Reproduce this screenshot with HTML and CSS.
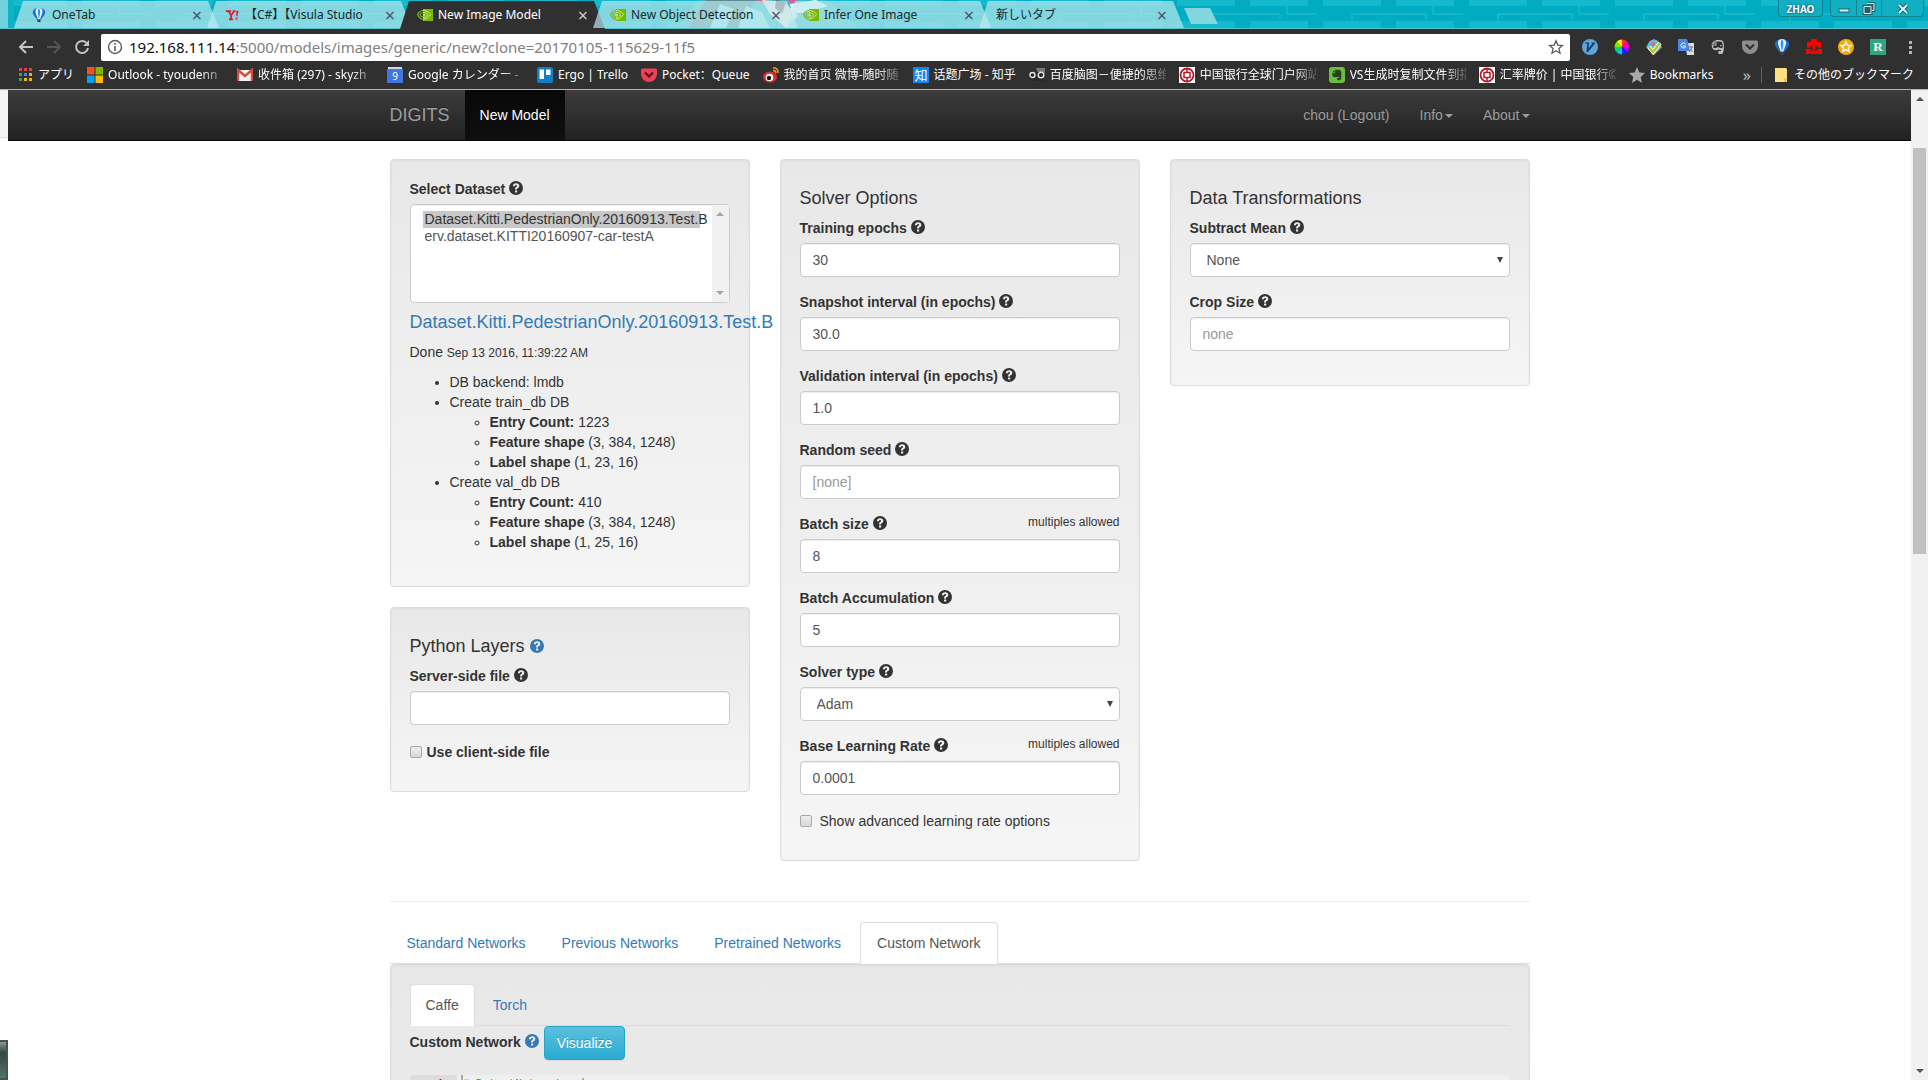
FILE: index.html
```
<!DOCTYPE html>
<html lang="en">
<head>
<meta charset="utf-8">
<meta name="viewport" content="width=device-width, initial-scale=1">
<title>New Image Model</title>
<link rel="stylesheet" href="styles.css">
</head>
<body>
<svg class="defs" width="0" height="0" aria-hidden="true">
  <symbol id="help" viewBox="0 0 14 14">
    <path fill-rule="evenodd" fill="currentColor" d="M7 0a7 7 0 1 1 0 14A7 7 0 0 1 7 0ZM6 9.4v2h2.2v-2ZM3.9 5.2H6c0-.8.4-1.200 1.100-1.200.6 0 1 .3 1 .8 0 .6-.4.8-1 1.300C6.300 6.700 6 7.300 6 8.500h2c0-.7.2-.9.9-1.400.9-.6 1.400-1.300 1.400-2.400 0-1.500-1.200-2.400-3.100-2.400C5.100 2.300 3.900 3.400 3.900 5.200Z"/>
  </symbol>
  <symbol id="nv" viewBox="0 0 16 12">
    <path fill="#76b900" d="M6 0h10v12H6z"/>
    <path fill="none" stroke="#76b900" stroke-width="1.200" d="M6 1.500C3.500 1.700 1.500 3.500.6 5.500 2 8.500 4 10.200 6 10.500M6 3.500C4.500 3.700 3.400 4.700 3 5.600c.8 1.700 1.900 2.500 3 2.800"/>
    <path fill="none" stroke="#cdeaa0" stroke-width="1" d="M6 1.500c4 0 6.500 2 7.500 4-1.800 2.500-4 4.400-7.500 4.700M6 3.600c2.400-.2 3.800.8 4.700 2C9.500 7.500 8 8.500 6 8.400M6 5l2 1-2 1"/>
  </symbol>
  <symbol id="balloon" viewBox="0 0 16 18">
    <path fill="#1b6fc4" d="M8 0c5 0 8 2.600 8 5.500 0 3.500-3.500 6-5.500 9.500h-5C3.500 11.500 0 9 0 5.500 0 2.600 3 0 8 0Z"/>
    <path fill="#dff1ff" d="M8 0C4 0 3 3 3.600 6L6.500 14h3l2.900-8C13 3 12 0 8 0Z"/>
    <path fill="#2f93e8" d="M8 0C6.500 2 6.200 5 7 9l1 5 1-5c.8-4 .5-7-1-9Z"/>
    <path fill="#39424c" d="M6 15h4v3H6z"/>
  </symbol>
  <symbol id="boc" viewBox="0 0 16 16">
    <path fill="#fff" d="M0 0h16v16H0z"/>
    <circle cx="8" cy="8" r="6.500" fill="none" stroke="#b01c2e" stroke-width="1.800"/>
    <path fill="none" stroke="#b01c2e" stroke-width="1.500" d="M8 1v4M8 11v4M5 5.500h6v5H5z"/>
  </symbol>
  <symbol id="elephant" viewBox="0 0 16 16">
    <path fill="currentColor" d="M6 1h4c2 0 3.500 1 3.700 3.500.4 3 .3 6-.5 9-.4 1.500-3 2-4.500 1.200-1-.7-.7-2.700.3-2.800h2v-1.200c-1 .6-2 .3-2.700-.5-1 1.300-3.200 1-4.500.5C2 10 1.700 7.500 1.700 5.500H5.500V1Z"/>
    <path fill="currentColor" d="M4.700 1.200v3.500H1.400z"/>
    <circle cx="10.800" cy="7" r="1" fill="#303030"/>
  </symbol>
</svg>

<header class="chrome">
  <div class="tabstrip">
    <svg class="theme-art" width="200" height="28" viewBox="0 0 200 28" aria-hidden="true">
      <path fill="#37bccb" d="M10 28 30 0h130l30 28z"/>
      <path fill="#5c8c96" d="M38 0h50L74 28H20z"/>
      <path fill="#93dfe5" d="m52 4 14 5-8 19H42zM78 6l16 6 8 16H70z"/>
      <path fill="#d36596" d="M88 0h12l2 4h-9zM118 0h10l8 8-8-2z"/>
      <path fill="#f6e8e2" d="m94 0 22 2 14 14-12 12-16-14z"/>
      <path fill="#86626b" d="m108 0 10 2-4 12-7-6z"/>
      <path fill="#e1f7f8" d="m122 4 26-4 12 6-20 6-16 2z"/>
    </svg>
    <div class="stub"></div>
    <nav class="tabs" aria-label="Browser tabs">
      <div class="tab"><svg class="favicon"><use href="#balloon"/></svg><span class="tab-title">OneTab</span><button class="close" aria-label="Close tab">×</button></div>
      <div class="tab jp"><svg class="favicon" viewBox="0 0 16 16"><path d="M1 3.500h6M4 3.500l3 5 3.500-5M7 8v5M4.500 13H9M9 3.500h3" stroke="#e8132f" stroke-width="2" fill="none"/><path d="m13 3 2.600.3L14 9.500h-1.200zM12.500 11h2l-.5 2h-2z" fill="#e8132f"/></svg><span class="tab-title">【C#】【Visula Studio</span><button class="close" aria-label="Close tab">×</button></div>
      <div class="tab active"><svg class="favicon"><use href="#nv"/></svg><span class="tab-title">New Image Model</span><button class="close" aria-label="Close tab">×</button></div>
      <div class="tab"><svg class="favicon"><use href="#nv"/></svg><span class="tab-title">New Object Detection</span><button class="close" aria-label="Close tab">×</button></div>
      <div class="tab"><svg class="favicon"><use href="#nv"/></svg><span class="tab-title">Infer One Image</span><button class="close" aria-label="Close tab">×</button></div>
      <div class="tab jp"><span class="tab-title">新しいタブ</span><button class="close" aria-label="Close tab">×</button></div>
      <button class="new-tab" aria-label="New tab"></button>
    </nav>
    <div class="window-controls">
      <button class="profile">ZHAO</button>
      <div class="control-group">
        <button aria-label="Minimize"><svg width="16" height="14"><rect x="3" y="7" width="10" height="3" fill="#d9f6f8" stroke="#25616b"/></svg></button>
        <button aria-label="Restore"><svg width="16" height="14"><path d="M6 1.500h7v7h-2M3 4.500h7v7H3zM5.500 7.500h2v1h-2z" fill="none" stroke="#25616b" stroke-width="3"/><path d="M6 1.500h7v7h-2M3 4.500h7v7H3z" fill="none" stroke="#d9f6f8"/></svg></button>
        <button class="wide" aria-label="Close window"><svg width="16" height="14"><path d="m4 3 8 8M12 3l-8 8" stroke="#25616b" stroke-width="4"/><path d="m4 3 8 8M12 3l-8 8" stroke="#d9f6f8" stroke-width="2"/></svg></button>
      </div>
    </div>
  </div>

  <div class="toolbar">
    <button class="tool" aria-label="Back"><svg width="16" height="16" viewBox="0 0 16 16"><path d="M15 8H2.500M8 2 2 8l6 6" fill="none" stroke="#c4c4c4" stroke-width="2"/></svg></button>
    <button class="tool" aria-label="Forward"><svg width="16" height="16" viewBox="0 0 16 16"><path d="M1 8h12.500M8 2l6 6-6 6" fill="none" stroke="#555" stroke-width="2"/></svg></button>
    <button class="tool" aria-label="Reload"><svg width="16" height="16" viewBox="0 0 16 16"><path d="M13 4.500A6 6 0 1 0 14 9" fill="none" stroke="#c4c4c4" stroke-width="2"/><path d="M15 1v6H9z" fill="#c4c4c4"/></svg></button>
    <div class="omnibox">
      <svg width="16" height="16" viewBox="0 0 16 16"><circle cx="8" cy="8" r="6.500" fill="none" stroke="#5a5a5a" stroke-width="1.400"/><path d="M7.200 7h1.600v5H7.200zM7.200 4h1.600v1.700H7.200z" fill="#5a5a5a"/></svg>
      <div class="url"><span class="host">192.168.111.14</span>:5000/models/images/generic/new?clone=20170105-115629-11f5</div>
      <svg width="16" height="16" viewBox="0 0 16 16"><path d="m8 1.700 1.800 4.400 4.700.4-3.600 3.100 1.100 4.600L8 11.700l-4 2.500 1.100-4.600L1.500 6.500l4.700-.4z" fill="none" stroke="#5a5a5a" stroke-width="1.300"/></svg>
    </div>
    <div class="extensions">
      <button aria-label="Vimium"><svg viewBox="0 0 16 16"><circle cx="8" cy="8" r="8" fill="#5ba4dc"/><path d="M3 3.500h4v1L6.500 9l4-4.500h-1v-1H13v1L6 13H4.500l.7-8.500H3z" fill="#173f66"/></svg></button>
      <button aria-label="Color picker"><svg viewBox="0 0 16 16"><path fill="#ff2a2a" d="M8 8 8 .5A7.500 7.500 0 0 1 13.300 2.700z"/><path fill="#f0b" d="M8 8 13.300 2.700A7.500 7.500 0 0 1 15.500 8z"/><path fill="#a0f" d="M8 8h7.500a7.500 7.500 0 0 1-2.200 5.300z"/><path fill="#12f" d="m8 8 5.300 5.300A7.500 7.500 0 0 1 8 15.500z"/><path fill="#0cf" d="M8 8v7.500a7.500 7.500 0 0 1-5.300-2.200z"/><path fill="#0d6" d="m8 8-5.300 5.300A7.500 7.500 0 0 1 .5 8z"/><path fill="#7e0" d="M8 8H.5a7.500 7.500 0 0 1 2.200-5.300z"/><path fill="#fe0" d="M8 8 2.700 2.700A7.500 7.500 0 0 1 8 .5z"/></svg></button>
      <button aria-label="Reader"><svg viewBox="0 0 16 16"><path d="m8 0 8 8-8 8-8-8z" fill="#e6ae32"/><circle cx="8" cy="7" r="6.500" fill="#68b4e8"/><path d="m3 8 4 5 7-9" fill="none" stroke="#fff" stroke-width="4"/><path d="m3 8 4 5 7-9" fill="none" stroke="#a9c93a" stroke-width="2.500"/><circle cx="7" cy="5" r="2" fill="#d87343"/></svg></button>
      <button aria-label="Translate"><svg viewBox="0 0 16 16"><path d="M7 4h9v12H9z" fill="#ddd"/><path d="M0 0h9l3 12H0z" fill="#4a86e8"/><path d="M7.500 5A2.500 2.500 0 1 0 7.500 8V7H5" fill="none" stroke="#fff"/><path d="M10.500 8H15M12.700 7v1M14 8c-1 3-2 4-3 5M12 10l2.500 3" stroke="#777" fill="none"/></svg></button>
      <button class="pale" aria-label="Evernote"><svg viewBox="0 0 16 16"><use href="#elephant"/><path fill="#303030" d="M6.500 2.500H10c1.500 0 2.300.8 2.500 2.500.3 2 .2 3 0 4H10L8 8 6 9H3.500L3 6.500h3.500z"/><circle cx="10.800" cy="6.800" r=".8" fill="#bbb"/></svg></button>
      <button aria-label="Pocket"><svg viewBox="0 0 16 16"><path d="M0 3q0-1.500 1.500-1.500h13Q16 1.500 16 3v4a8 8 0 0 1-16 0z" fill="#8d8d8d"/><path d="m4 5.500 4 4 4-4" fill="none" stroke="#333" stroke-width="2.200"/></svg></button>
      <button aria-label="OneTab"><svg viewBox="0 0 16 18"><use href="#balloon"/></svg></button>
      <button aria-label="Briefcase"><svg viewBox="0 0 16 16"><path d="M5 0h6v3h4v5.500h-3.500V7h-7v1.500H1V3h4zM0 10h4.500v1.500h7V10H16v5H0z" fill="#f00"/><path d="M6.500 6.500h3v4h-3z" fill="#f00"/></svg></button>
      <button aria-label="Favorites"><svg viewBox="0 0 16 16"><circle cx="8" cy="8" r="8" fill="#f5a910"/><path d="m8 3 1.500 3.300 3.500.3-2.600 2.300.8 3.500L8 10.600l-3.200 1.800.8-3.500L3 6.600l3.500-.3z" fill="none" stroke="#fff" stroke-width="1.400"/></svg></button>
      <button class="r-badge" aria-label="R">R</button>
      <button aria-label="Menu"><svg viewBox="0 0 16 16"><path d="M7 2h3v3H7zM7 7h3v3H7zM7 12h3v3H7z" fill="#b5b5b5"/></svg></button>
    </div>
  </div>

  <nav class="bookmarks" aria-label="Bookmarks">
    <a class="bm jp" href="#"><svg viewBox="0 0 16 16"><path d="M2 1h3v3H2zM7 1h3v3H7zM12 1h3v3h-3z" fill="#e0443a"/><path d="M2 6h3v3H2z" fill="#2faa56"/><path d="M7 6h3v3H7z" fill="#4285f4"/><path d="M12 6h3v3h-3zM7 11h3v3H7zM12 11h3v3h-3z" fill="#f4b400"/><path d="M2 11h3v3H2z" fill="#2faa56"/></svg><span>アプリ</span></a>
    <a class="bm" href="#"><svg viewBox="0 0 16 16"><path d="M0 0h7.500v7.500H0z" fill="#f25022"/><path d="M8.500 0H16v7.500H8.500z" fill="#7fba00"/><path d="M0 8.500h7.500V16H0z" fill="#00a4ef"/><path d="M8.500 8.500H16V16H8.500z" fill="#ffb900"/></svg><span class="long">Outlook - tyoudenn</span></a>
    <a class="bm" href="#"><svg viewBox="0 0 16 16"><path d="M1 3h14v11H1z" fill="#f2f2f2"/><path d="M1 14V3l7 6 7-6v11" fill="none" stroke="#d54b3d" stroke-width="2.400"/></svg><span class="long">收件箱 (297) - skyzh</span></a>
    <a class="bm jp" href="#"><svg viewBox="0 0 16 16"><path d="M1 0h14v3H1z" fill="#ccd6e6"/><path d="M0 2h16v14H0z" fill="#3f76e0"/><text x="8" y="13" fill="#fff" font-size="10" text-anchor="middle">9</text></svg><span class="long">Google カレンダー -</span></a>
    <a class="bm" href="#"><svg viewBox="0 0 16 16"><rect width="16" height="16" rx="2" fill="#0f7fc7"/><path d="M2.500 2.500H7V12H2.500zM9 2.500h4.500V8H9z" fill="#fff"/></svg><span>Ergo | Trello</span></a>
    <a class="bm" href="#"><svg viewBox="0 0 16 16"><path d="M0 3q0-1.500 1.500-1.500h13Q16 1.500 16 3v4a8 8 0 0 1-16 0z" fill="#ee4056"/><path d="m4 5.500 4 4 4-4" fill="none" stroke="#4b1720" stroke-width="2.200"/></svg><span>Pocket：Queue</span></a>
    <a class="bm" href="#"><svg viewBox="0 0 16 16"><ellipse cx="7" cy="10" rx="7" ry="5.500" fill="#e22c2c"/><circle cx="6.500" cy="10.500" r="3.800" fill="#fff"/><circle cx="6" cy="11" r="2.200" fill="#111"/><path d="M10 1c3.500-.5 5.500 2 5 5M10 3.500c2 0 3 .8 3 2.500" fill="none" stroke="#f29b20" stroke-width="1.500"/></svg><span class="long">我的首页 微博-随时随</span></a>
    <a class="bm" href="#"><svg viewBox="0 0 16 16"><path d="M0 0h16v16H0z" fill="#0f88eb"/><text x="8" y="13" fill="#fff" font-size="13" text-anchor="middle">知</text></svg><span>话题广场 - 知乎</span></a>
    <a class="bm" href="#"><svg viewBox="0 0 16 16"><path d="M7 1h9v5H9z" fill="#777"/><path d="M1 5h14v9H1z" fill="#222a2c"/><circle cx="3.500" cy="8" r="2.500" fill="#222" stroke="#e5e5e5" stroke-width="1.400"/><circle cx="12" cy="8" r="2.800" fill="#222" stroke="#e5e5e5" stroke-width="1.400"/></svg><span class="long">百度脑图－便捷的思维</span></a>
    <a class="bm" href="#"><svg><use href="#boc"/></svg><span class="long">中国银行全球门户网站</span></a>
    <a class="bm dark" href="#"><svg viewBox="0 0 16 16"><rect width="16" height="16" rx="3" fill="#69c03c"/><svg x="2" y="2" width="12" height="12" viewBox="0 0 16 16"><use href="#elephant"/></svg></svg><span class="long">VS生成时复制文件到指</span></a>
    <a class="bm" href="#"><svg><use href="#boc"/></svg><span class="long">汇率牌价 | 中国银行©</span></a>
    <a class="bm" href="#"><svg viewBox="0 0 16 16"><path d="m8 0 2.300 5.500 5.700.5-4.300 3.900L13 16l-5-3.300L3 16l1.300-6.100L0 6l5.700-.5z" fill="#aaa"/></svg><span>Bookmarks</span></a>
    <button class="more" aria-label="More bookmarks">»</button>
    <a class="bm folder jp" href="#"><svg viewBox="0 0 16 16"><path d="M2 1h11l1 1v13H2z" fill="#ffe082"/><path d="M11 11h3v4h-3z" fill="#f4c64f"/></svg><span>その他のブックマーク</span></a>
  </nav>
</header>

<div class="viewport">
  <div class="edge" aria-hidden="true"><div class="edge-top"></div><div class="edge-bottom"></div></div>
  <div class="page">
    <nav class="navbar">
      <div class="navbar-inner">
        <a class="brand" href="#">DIGITS</a>
        <a class="nav-link current" href="#">New Model</a>
        <a class="nav-link push" href="#">chou (Logout)</a>
        <a class="nav-link" href="#">Info<i class="caret"></i></a>
        <a class="nav-link" href="#">About<i class="caret"></i></a>
      </div>
    </nav>

    <main class="container">
      <form class="columns">
        <div class="column">
          <section class="well">
            <label class="label" for="dataset">Select Dataset <svg class="help"><use href="#help"/></svg></label>
            <div class="control listbox">
              <select id="dataset" size="5">
                <option selected>Dataset.Kitti.PedestrianOnly.20160913.Test.B</option>
                <option>erv.dataset.KITTI20160907-car-testA</option>
              </select>
              <div class="list-scroll" aria-hidden="true"><i class="arrow up"></i><i class="arrow down"></i></div>
            </div>
            <h4 class="heading"><a href="#">Dataset.Kitti.PedestrianOnly.20160913.Test.B</a></h4>
            <div>Done <small>Sep 13 2016, 11:39:22 AM</small></div>
            <ul class="facts">
              <li>DB backend: lmdb</li>
              <li>Create train_db DB
                <ul>
                  <li><b>Entry Count:</b> 1223</li>
                  <li><b>Feature shape</b> (3, 384, 1248)</li>
                  <li><b>Label shape</b> (1, 23, 16)</li>
                </ul>
              </li>
              <li>Create val_db DB
                <ul>
                  <li><b>Entry Count:</b> 410</li>
                  <li><b>Feature shape</b> (3, 384, 1248)</li>
                  <li><b>Label shape</b> (1, 25, 16)</li>
                </ul>
              </li>
            </ul>
          </section>
          <section class="well">
            <h4 class="heading">Python Layers <a href="#" aria-label="Help"><svg class="help"><use href="#help"/></svg></a></h4>
            <div class="group">
              <label class="label" for="server-file">Server-side file <svg class="help"><use href="#help"/></svg></label>
              <input class="control" id="server-file" type="text">
            </div>
            <div class="check tight"><input type="checkbox" id="client-file"><label for="client-file"><b>Use client-side file</b></label></div>
          </section>
        </div>

        <div class="column">
          <section class="well">
            <h4 class="heading">Solver Options</h4>
            <div class="group">
              <label class="label" for="epochs">Training epochs <svg class="help"><use href="#help"/></svg></label>
              <input class="control" id="epochs" type="text" value="30">
            </div>
            <div class="group">
              <label class="label" for="snapshot">Snapshot interval (in epochs) <svg class="help"><use href="#help"/></svg></label>
              <input class="control" id="snapshot" type="text" value="30.0">
            </div>
            <div class="group">
              <label class="label" for="validation">Validation interval (in epochs) <svg class="help"><use href="#help"/></svg></label>
              <input class="control" id="validation" type="text" value="1.0">
            </div>
            <div class="group">
              <label class="label" for="seed">Random seed <svg class="help"><use href="#help"/></svg></label>
              <input class="control" id="seed" type="text" placeholder="[none]">
            </div>
            <div class="group">
              <div class="label-row"><label class="label" for="batch">Batch size <svg class="help"><use href="#help"/></svg></label><small>multiples allowed</small></div>
              <input class="control" id="batch" type="text" value="8">
            </div>
            <div class="group">
              <label class="label" for="accumulation">Batch Accumulation <svg class="help"><use href="#help"/></svg></label>
              <input class="control" id="accumulation" type="text" value="5">
            </div>
            <div class="group">
              <label class="label" for="solver">Solver type <svg class="help"><use href="#help"/></svg></label>
              <select class="control dropdown" id="solver"><option>Adam</option></select>
            </div>
            <div class="group">
              <div class="label-row"><label class="label" for="rate">Base Learning Rate <svg class="help"><use href="#help"/></svg></label><small>multiples allowed</small></div>
              <input class="control" id="rate" type="text" value="0.0001">
            </div>
            <div class="check"><input type="checkbox" id="advanced"><label for="advanced">Show advanced learning rate options</label></div>
          </section>
        </div>

        <div class="column">
          <section class="well">
            <h4 class="heading">Data Transformations</h4>
            <div class="group">
              <label class="label" for="mean">Subtract Mean <svg class="help"><use href="#help"/></svg></label>
              <select class="control dropdown" id="mean"><option>None</option></select>
            </div>
            <div class="group">
              <label class="label" for="crop">Crop Size <svg class="help"><use href="#help"/></svg></label>
              <input class="control" id="crop" type="text" placeholder="none">
            </div>
          </section>
        </div>
      </form>

      <hr class="rule">

      <nav class="nav-tabs network-tabs">
        <a href="#">Standard Networks</a>
        <a href="#">Previous Networks</a>
        <a href="#">Pretrained Networks</a>
        <a class="selected" href="#">Custom Network</a>
      </nav>
      <section class="well tall">
        <nav class="nav-tabs">
          <a class="selected" href="#">Caffe</a>
          <a href="#">Torch</a>
        </nav>
        <div class="network-row">
          <b>Custom Network <a href="#" aria-label="Help"><svg class="help"><use href="#help"/></svg></a></b>
          <button class="visualize" type="button">Visualize</button>
        </div>
        <div class="editor"><div class="gutter">1</div><code># DetectNet network</code></div>
      </section>
    </main>
  </div>
  <div class="scrollbar" aria-hidden="true">
    <i class="arrow up"></i><div class="thumb"></div><i class="arrow down"></i>
  </div>
</div>
</body>
</html>
```
FILE: styles.css
```
* { box-sizing: border-box; }

body {
  margin: 0;
  height: 100vh;
  display: flex;
  flex-direction: column;
  overflow: hidden;
  font: 14px/20px "Liberation Sans", Arial, sans-serif;
  color: #333;
  background: #fff;
}

a { color: #337ab7; text-decoration: none; }
button { font: inherit; padding: 0; border: 0; background: none; color: inherit; }
small { font-size: 12px; }
.defs { position: absolute; }

/* Browser window */
.chrome {
  flex: none;
  font: 12px/16px "Noto Sans", "Noto Sans CJK SC", sans-serif;
  background: #303030;
  border-bottom: 1px solid #b5b5b5;
}
.jp { font-family: "Noto Sans", "Noto Sans CJK JP", sans-serif; }

.tabstrip {
  position: relative;
  display: flex;
  height: 29px;
  border-bottom: 1px solid #4fc3cf;
  background: #00acc1 url("data:image/svg+xml,%3Csvg xmlns='http://www.w3.org/2000/svg' width='146' height='28'%3E%3Cpath fill='%2314b9cc' d='M0 0h58v6H0zM73 0h58v6H73zM0 21h58v7H0zM73 21h58v7H73z'/%3E%3Cpath fill='none' stroke='%2325becd' d='M29 21v-7h74v5M110 6v8h30'/%3E%3C/svg%3E") 9px 0;
}
.theme-art { position: absolute; left: 668px; top: 0; }
.stub { width: 14px; flex: none; background: rgba(225, 245, 247, .5); border-right: 6px solid #10b2c5; }
.tabs { position: relative; display: flex; flex: 1; padding-top: 1px; }
.tab {
  display: flex;
  align-items: center;
  gap: 5px;
  width: 205px;
  height: 27px;
  margin-right: -12px;
  padding: 0 15px 0 17px;
  background: rgba(190, 234, 239, .68);
  clip-path: polygon(9px 0, 194px 0, 100% 100%, 0 100%);
  color: #14292c;
}
.tab.active { background: #303030; color: #fff; height: 28px; }
.favicon { width: 16px; height: 14px; flex: none; }
.tab-title { flex: 1; white-space: nowrap; }
.close { width: 14px; font-size: 18px; line-height: 16px; color: #456; }
.active .close { color: #ccc; }
.new-tab {
  width: 34px;
  height: 16px;
  margin: 7px 0 0 12px;
  background: #82d6de;
  clip-path: polygon(0 0, 26px 0, 100% 100%, 7px 100%);
}
.window-controls { display: flex; gap: 7px; padding-right: 4px; height: 17px; }
.profile, .control-group {
  border: 1px solid #168391;
  border-top: 0;
  border-radius: 0 0 4px 4px;
  background: #10b0c2;
}
.profile { width: 45px; padding-top: 2px; font-size: 10px; font-weight: bold; line-height: 14px; color: #fff; text-shadow: 0 0 2px #124; }
.control-group { display: flex; }
.control-group button { width: 25px; padding-top: 2px; line-height: 14px; }
.control-group button + button { border-left: 1px solid #168391; }
.control-group .wide { width: 42px; }

.toolbar {
  display: flex;
  align-items: center;
  height: 32px;
  margin-top: 2px;
  padding: 2px 10px 2px 12px;
}
.tool { width: 28px; height: 16px; }
.tool svg, .extensions svg { display: block; width: 16px; height: 16px; margin: auto; }
.omnibox {
  display: flex;
  align-items: center;
  flex: 1;
  gap: 6px;
  height: 27px;
  margin-left: 5px;
  padding: 0 6px;
  background: #fff;
  border-radius: 2px;
}
.url { flex: 1; font-size: 15px; line-height: 20px; color: #808080; }
.host { color: #111; }
.extensions { display: flex; gap: 16px; margin-left: 12px; }
.extensions button { width: 16px; height: 16px; }
.pale { color: #bbb; }
.r-badge { background: #2da781; color: #fff; font: bold 13px/16px "Liberation Serif", serif; }

.bookmarks { display: flex; align-items: center; height: 26px; padding: 0 14px 2px 17px; }
.bm { display: flex; align-items: center; flex: none; gap: 5px; margin-right: 13px; color: #fff; white-space: nowrap; }
.bm > svg { width: 16px; height: 16px; flex: none; }
.bm .long { width: 116px; mask-image: linear-gradient(to right, #000 92px, rgba(0, 0, 0, .2) 116px); }
.bm.dark svg svg { color: #2c3d22; }
.bm.folder { margin: 0; padding-left: 11px; border-left: 1px solid #606060; }
.more { margin-left: auto; margin-right: 10px; color: #bbb; font-size: 16px; }

/* Page viewport */
.viewport { display: flex; flex: 1; min-height: 0; }
.edge { display: flex; flex-direction: column; justify-content: space-between; width: 8px; }
.edge-top { height: 48px; background: #f5f5f5; border-bottom: 1px solid #ddd; }
.edge-bottom { height: 40px; border: 2px solid #46544f; border-left: 0; background: linear-gradient(#8d9793, #2f4743 30%, #54706a); }
.page { flex: 1; overflow: hidden; }
.scrollbar { display: flex; flex-direction: column; align-items: center; width: 17px; background: #f1f1f1; }
.arrow { width: 0; height: 0; border: 4px solid transparent; }
.up { border-top: 0; border-bottom-color: #505050; margin-top: 7px; }
.down { border-bottom: 0; border-top-color: #505050; margin: auto 0 7px; }
.thumb { width: 13px; height: 41%; margin-top: 47px; background: #c1c1c1; }

.navbar {
  height: 51px;
  border-bottom: 1px solid #080808;
  background: linear-gradient(#3c3c3c, #222);
}
.navbar-inner { display: flex; max-width: 1170px; margin: 0 auto; }
.brand, .nav-link { padding: 15px; color: #9d9d9d; text-shadow: 0 -1px 0 rgba(0, 0, 0, .25); }
.brand { font-size: 18px; }
.nav-link.current { color: #fff; background: linear-gradient(#080808, #0f0f0f); }
.push { margin-left: auto; }
.caret { display: inline-block; margin-left: 2px; border: 4px solid transparent; border-top-color: currentColor; border-bottom: 0; vertical-align: middle; }

.container { max-width: 1170px; margin: 0 auto; padding: 18px 15px 0; }
.columns { display: grid; grid-template-columns: repeat(3, minmax(0, 1fr)); gap: 30px; }
.well {
  margin-bottom: 20px;
  padding: 19px;
  border: 1px solid #dcdcdc;
  border-radius: 4px;
  background: linear-gradient(#e8e8e8, #f5f5f5);
  box-shadow: inset 0 1px 3px rgba(0, 0, 0, .05);
}
.column .well { padding-bottom: 14px; }
.column:last-child .well { padding-bottom: 4px; }
.heading { margin: 9px 0 10px; font-size: 18px; line-height: 20px; font-weight: normal; white-space: nowrap; }
.label { display: block; height: 20px; margin-bottom: 5px; font-weight: bold; }
.label-row { display: flex; justify-content: space-between; }
.label-row small { line-height: 17px; }
.help { width: 14px; height: 14px; vertical-align: -1px; }
.group { margin-bottom: 15px; }
.column:last-child .group:last-child { margin-bottom: 30px; }

.control {
  display: block;
  width: 100%;
  height: 34px;
  padding: 6px 12px;
  font: inherit;
  color: #555;
  background: #fff;
  border: 1px solid #ccc;
  border-radius: 4px;
  box-shadow: inset 0 1px 1px rgba(0, 0, 0, .075);
}
.control::placeholder { color: #999; }
.dropdown {
  appearance: none;
  padding: 6px 16px;
  background: #fff url("data:image/svg+xml,%3Csvg xmlns='http://www.w3.org/2000/svg' width='6' height='6'%3E%3Cpath fill='%23444' d='M0 0h6L3 6z'/%3E%3C/svg%3E") no-repeat right 6px center;
}
.listbox { display: flex; height: 99px; padding: 0; }
.listbox select {
  flex: 1;
  min-width: 0;
  height: 100%;
  padding: 6px 12px;
  border: 0;
  outline: 0;
  background: none;
  color: inherit;
  font: inherit;
  line-height: 16px;
  overflow: hidden;
}
.listbox option { min-height: 17px; padding: 0 2px 1px; overflow: visible; }
.listbox option:checked { background: #c8c8c8 linear-gradient(#c8c8c8, #c8c8c8); color: #333; }
.list-scroll { display: flex; flex-direction: column; align-items: center; width: 17px; background: #f1f1f1; }
.list-scroll .up { border-bottom-color: #a3a3a3; }
.list-scroll .down { border-top-color: #a3a3a3; }

.facts { margin: 9px 0 20px; padding-left: 40px; }
.facts ul { padding-left: 40px; }

.check { display: flex; align-items: center; gap: 8px; margin: 16px 0 15px; }
.check.tight { gap: 5px; margin: 17px 0 15px; }
.check input {
  appearance: none;
  width: 12px;
  height: 12px;
  margin: 0;
  border: 1px solid #a9a9a9;
  border-radius: 2px;
  background: linear-gradient(#eee, #d8d8d8);
}

.rule { margin: 20px 0; border: 0; border-top: 1px solid #eee; }

.nav-tabs { display: flex; gap: 2px; border-bottom: 1px solid #ddd; }
.nav-tabs a { margin-bottom: -1px; padding: 10px 15px; border: 1px solid transparent; border-radius: 4px 4px 0 0; }
.network-tabs a { padding: 10px 16px; }
.nav-tabs .selected { color: #555; background: #fff; border-color: #ddd #ddd #fff; }
.well.tall { height: 600px; background: linear-gradient(#e8e8e8, #f5f5f5 900px); }
.network-row { display: flex; gap: 5px; }
.network-row b { padding-top: 6px; }
.visualize {
  padding: 6px 12px;
  border: 1px solid #28a4c9;
  border-radius: 4px;
  background: linear-gradient(#5bc0de, #2aabd2);
  color: #fff;
  text-shadow: 0 -1px 0 rgba(0, 0, 0, .2);
  box-shadow: 0 1px 1px rgba(0, 0, 0, .075);
}
.editor { display: flex; margin-top: 15px; font: 11px/16px "Liberation Mono", monospace; background: #efefef; border-radius: 4px; }
.gutter { width: 47px; margin-right: 4px; padding-right: 13px; text-align: right; background: #ddd; border-radius: 4px 0 0 0; font: inherit; }
.editor code { font: inherit; color: #4c886b; border-left: 2px solid #aaa; }
```
